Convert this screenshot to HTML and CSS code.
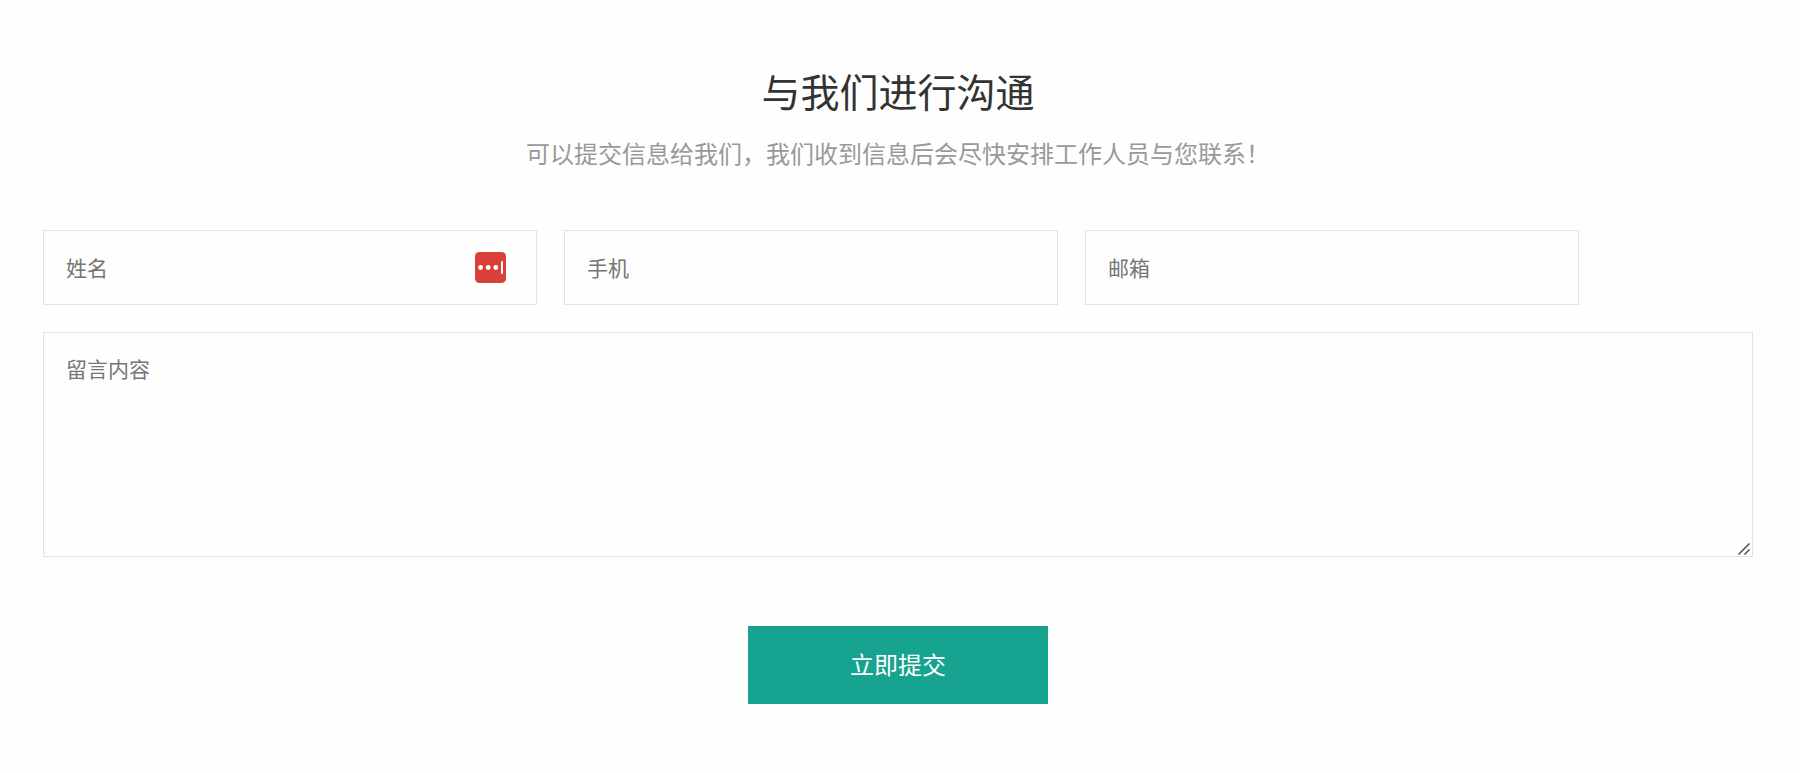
FILE: index.html
```html
<!DOCTYPE html>
<html lang="zh-CN">
<head>
    <meta charset="UTF-8">
    <meta name="viewport" content="width=device-width, initial-scale=1.0">
    <title>与我们进行沟通</title>
    <link rel="stylesheet" href="styles.css">
</head>
<body>
    <main class="contact">
        <h2 class="contact-title">与我们进行沟通</h2>
        <p class="contact-desc">可以提交信息给我们，我们收到信息后会尽快安排工作人员与您联系！</p>

        <form class="contact-form">
            <div class="fields">
                <div class="field">
                    <input type="text" class="control" name="name" placeholder="姓名" aria-label="姓名">
                    <svg class="field-icon" viewBox="0 0 31 31" aria-hidden="true">
                        <rect width="31" height="31" rx="4.5" fill="#d9403a"/>
                        <circle cx="5.6" cy="15.5" r="2.4" fill="#fff"/>
                        <circle cx="13.2" cy="15.5" r="2.4" fill="#fff"/>
                        <circle cx="20.8" cy="15.5" r="2.4" fill="#fff"/>
                        <rect x="26" y="9" width="2" height="13" rx="0.8" fill="#fff"/>
                    </svg>
                </div>
                <div class="field">
                    <input type="tel" class="control" name="phone" placeholder="手机" aria-label="手机">
                </div>
                <div class="field">
                    <input type="email" class="control" name="email" placeholder="邮箱" aria-label="邮箱">
                </div>
            </div>
            <textarea class="control message" name="message" placeholder="留言内容" aria-label="留言内容"></textarea>
            <button type="submit" class="submit">立即提交</button>
        </form>
    </main>
</body>
</html>
```

FILE: styles.css
```css
* { box-sizing: border-box; }

body {
    margin: 0;
    background: #fefefe;
    font-family: "Noto Sans CJK SC", sans-serif;
}

.contact { padding: 61px 47px 64px 43px; }

.contact-title {
    margin: 0;
    font-size: 39px;
    font-weight: 400;
    line-height: 58px;
    text-align: center;
    color: #333;
}

.contact-desc {
    margin: 16px 0 59px;
    font-size: 24px;
    font-weight: 400;
    line-height: 36px;
    text-align: center;
    color: #999;
}

.contact-form {
    display: flex;
    flex-direction: column;
    gap: 27px;
}

.fields {
    display: grid;
    grid-template-columns: repeat(3, 1fr);
    gap: 27px;
    margin-right: 174px;
}

.field { position: relative; }

.control {
    display: block;
    width: 100%;
    height: 75px;
    padding: 20px 22px 22px;
    border: 1px solid #e2e2e2;
    border-radius: 0;
    background: #fefefe;
    font-family: inherit;
    font-size: 21px;
    line-height: 30px;
    color: #333;
}

.control::placeholder { color: #757575; }

/* password manager badge at the end of the name box */
.field-icon {
    position: absolute;
    top: 22px;
    right: 31px;
    width: 31px;
    height: 31px;
}

.message {
    height: 225px;
    resize: both;
}

.message::-webkit-resizer {
    background: url("data:image/svg+xml,%3Csvg xmlns='http://www.w3.org/2000/svg' viewBox='0 0 15 15'%3E%3Cpath d='M1.5 13.5l11-11M7.5 13.5l5-5' stroke='%23555' stroke-width='1.6' fill='none'/%3E%3C/svg%3E") no-repeat right bottom;
}

.submit {
    align-self: center;
    width: 300px;
    height: 78px;
    margin-top: 42px;
    padding: 0 0 4px;
    border: none;
    background: #16a38f;
    font-family: inherit;
    font-size: 24px;
    color: #fff;
    cursor: pointer;
}
```
